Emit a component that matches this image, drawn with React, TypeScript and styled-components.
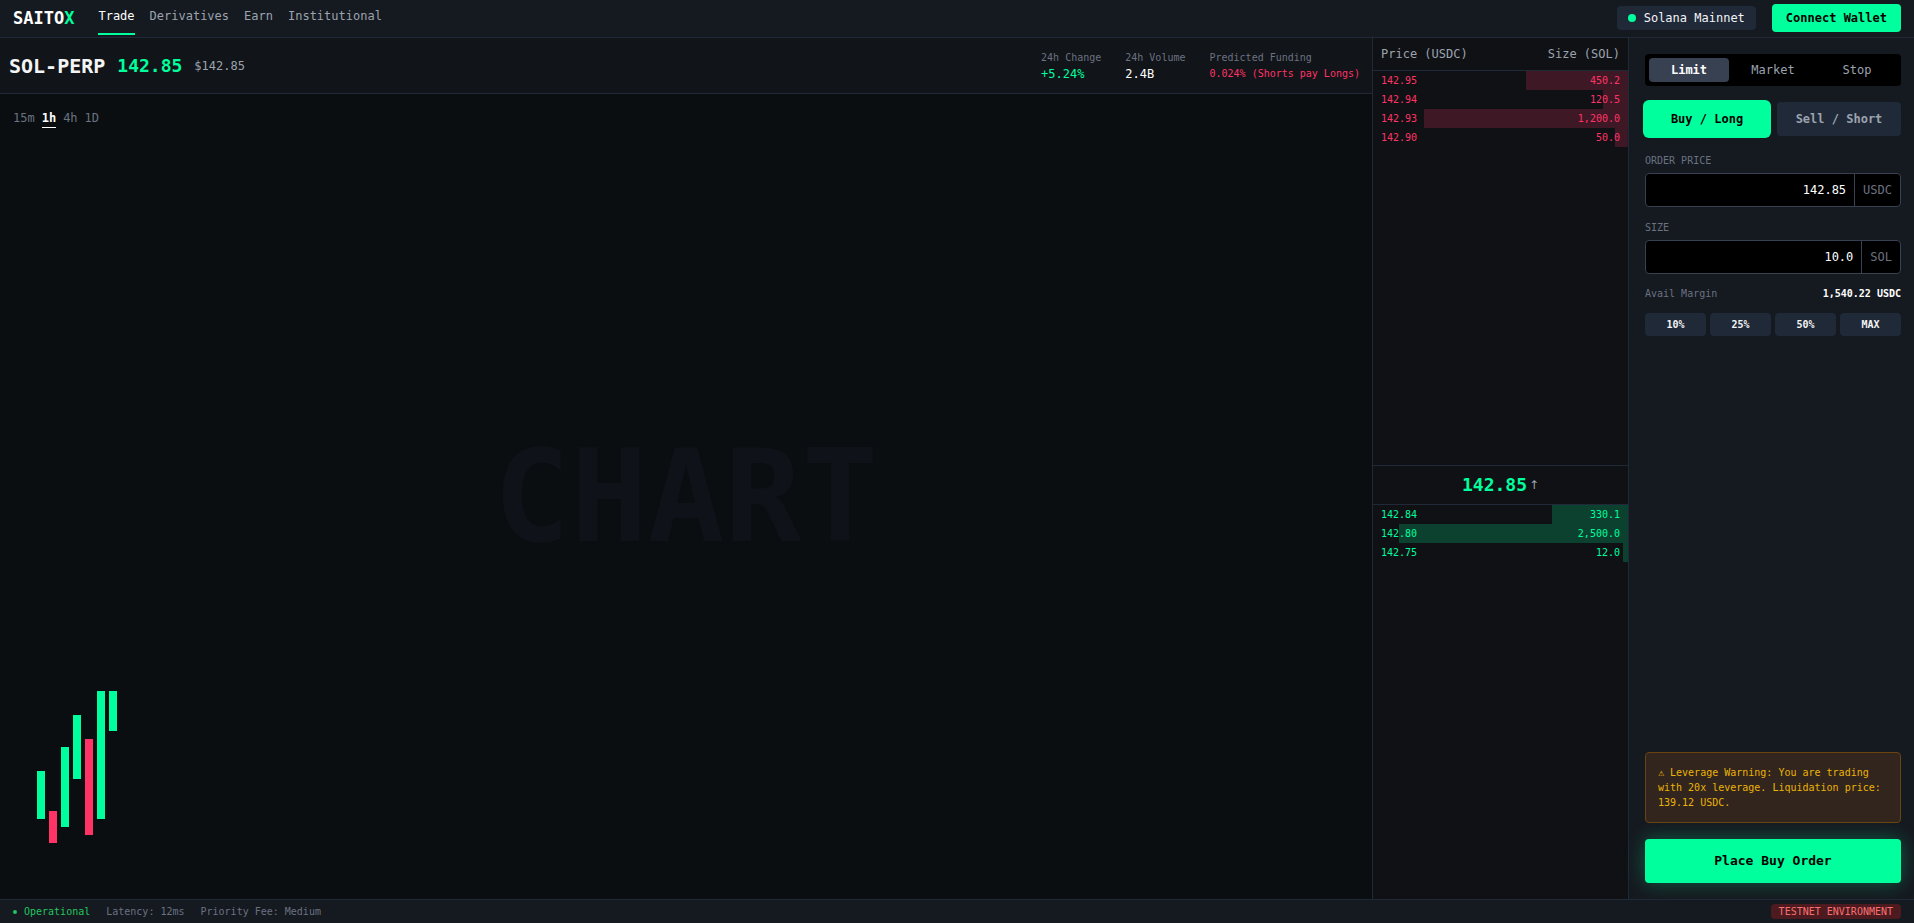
import React from "react";
import styled, { createGlobalStyle, css } from "styled-components";

const c = {
  green: "#00ff9d",
  red: "#ff3366",
  page: "#0a0e10",
  book: "#0f1115",
  title: "#111418",
  panel: "#151920",
  line: "#1f2937",
  lineStrong: "#374151",
  muted: "#9ca3af",
  dim: "#6b7280",
  text: "#f3f4f6",
};

const Global = createGlobalStyle`
  *, *::before, *::after { box-sizing: border-box; }
  body {
    margin: 0;
    background: ${c.page};
    color: ${c.text};
    font-family: "DejaVu Sans Mono", "Liberation Mono", monospace;
    font-size: 12px;
    line-height: 16px;
  }
  button, input { font: inherit; color: inherit; border: 0; margin: 0; padding: 0; background: none; }
  button { cursor: pointer; white-space: nowrap; }
  a { color: inherit; text-decoration: none; }
`;

const Page = styled.div`
  display: flex;
  flex-direction: column;
  min-height: 100vh;
`;

const Header = styled.header`
  display: flex;
  align-items: flex-start;
  justify-content: space-between;
  height: 38px;
  padding: 0 13px;
  background: ${c.panel};
  border-bottom: 1px solid ${c.line};
`;

const HeaderSide = styled.div<{ $gap: number }>`
  display: flex;
  align-items: center;
  height: 36px;
  gap: ${(p) => p.$gap}px;
`;

const Logo = styled.div`
  font-size: 17px;
  font-weight: 700;
  line-height: 28px;
  color: #fff;
  span { color: ${c.green}; }
`;

const Nav = styled.nav`
  display: flex;
  gap: 15px;
  height: 34px;
`;

const NavLink = styled.a<{ $active?: boolean }>`
  display: flex;
  padding-top: 7px;
  height: 34px;
  color: ${(p) => (p.$active ? "#fff" : c.muted)};
  border-bottom: 2px solid ${(p) => (p.$active ? c.green : "transparent")};
`;

const Network = styled.div`
  display: flex;
  align-items: center;
  gap: 8px;
  height: 24px;
  padding: 0 11px;
  border-radius: 4px;
  background: ${c.line};
`;

const Dot = styled.span`
  width: 8px;
  height: 8px;
  border-radius: 50%;
  background: ${c.green};
`;

const Connect = styled.button`
  height: 28px;
  padding: 0 14px;
  border-radius: 4px;
  background: ${c.green};
  color: #000;
  font-weight: 700;
`;

const Main = styled.main`
  flex: 1;
  display: grid;
  grid-template-columns: minmax(0, 1fr) 256px 286px;
`;

const Market = styled.section`
  display: flex;
  flex-direction: column;
`;

const TitleBar = styled.div`
  display: flex;
  align-items: center;
  justify-content: space-between;
  height: 56px;
  padding: 0 12px 0 9px;
  background: ${c.title};
  border-bottom: 1px solid ${c.line};
`;

const Pair = styled.div`
  display: flex;
  align-items: center;
  gap: 12px;
`;

const Symbol = styled.h1`
  margin: 0;
  font-size: 20px;
  line-height: 28px;
  font-weight: 700;
`;

const Price = styled.span`
  font-size: 18px;
  line-height: 28px;
  font-weight: 700;
  color: ${c.green};
`;

const Mark = styled.span`
  color: ${c.muted};
`;

const Stats = styled.dl`
  display: flex;
  gap: 24px;
  margin: 0;
`;

const Stat = styled.div`
  dt { font-size: 10px; color: ${c.dim}; }
`;

const StatValue = styled.dd<{ $color: string; $small?: boolean }>`
  margin: 0;
  color: ${(p) => p.$color};
  ${(p) => p.$small && css`font-size: 10px;`}
`;

const Chart = styled.div`
  position: relative;
  flex: 1;
  display: flex;
  flex-direction: column;
  justify-content: space-between;
`;

const Frames = styled.div`
  display: flex;
  gap: 7px;
  padding: 15px 13px;
`;

const Frame = styled.button<{ $active?: boolean }>`
  height: 19px;
  color: ${(p) => (p.$active ? "#fff" : c.dim)};
  font-weight: ${(p) => (p.$active ? 700 : 400)};
  border-bottom: 1px solid ${(p) => (p.$active ? "#fff" : "transparent")};
`;

const Watermark = styled.div`
  position: absolute;
  inset: 0;
  display: flex;
  align-items: center;
  justify-content: center;
  font-size: 128px;
  line-height: 128px;
  font-weight: 700;
  color: #0f1218;
  pointer-events: none;
`;

const Candles = styled.div`
  display: flex;
  align-items: flex-end;
  gap: 4px;
  padding: 0 37px 56px;
`;

const Candle = styled.div<{ $h: number; $lift: number; $down?: boolean }>`
  width: 8px;
  height: ${(p) => p.$h}px;
  margin-bottom: ${(p) => p.$lift}px;
  background: ${(p) => (p.$down ? c.red : c.green)};
`;

const Book = styled.section`
  display: flex;
  flex-direction: column;
  background: ${c.book};
  border-left: 1px solid ${c.line};
`;

const BookHead = styled.div`
  display: flex;
  align-items: center;
  justify-content: space-between;
  height: 33px;
  padding: 0 8px;
  color: ${c.muted};
  border-bottom: 1px solid ${c.line};
`;

const Side = styled.div`
  flex: 1 1 0;
`;

const Level = styled.div<{ $depth: number; $ask?: boolean }>`
  display: flex;
  justify-content: space-between;
  padding: 2px 8px;
  font-size: 10px;
  line-height: 15px;
  color: ${(p) => (p.$ask ? c.red : c.green)};
  background: linear-gradient(
      ${(p) => (p.$ask ? "#3f1826, #3f1826" : "#0c4130, #0c4130")}
    )
    right / ${(p) => p.$depth}% 100% no-repeat;
`;

const Mid = styled.div`
  display: flex;
  align-items: center;
  justify-content: center;
  gap: 2px;
  height: 40px;
  border-top: 1px solid ${c.line};
  border-bottom: 1px solid ${c.line};
  color: ${c.muted};
`;

const Arrow = styled.span`
  font-family: "DejaVu Sans", sans-serif;
`;

const Ticket = styled.form`
  display: flex;
  flex-direction: column;
  padding: 16px 13px 16px 16px;
  background: ${c.panel};
  border-left: 1px solid ${c.line};
`;

const Tabs = styled.div`
  display: flex;
  gap: 4px;
  padding: 4px;
  border-radius: 4px;
  background: #000;
`;

const Tab = styled.button<{ $active?: boolean }>`
  flex: 1;
  height: 24px;
  border-radius: 4px;
  background: ${(p) => (p.$active ? c.lineStrong : "transparent")};
  color: ${(p) => (p.$active ? "#fff" : c.muted)};
  font-weight: ${(p) => (p.$active ? 700 : 400)};
`;

const Sides = styled.div`
  display: flex;
  gap: 8px;
  margin: 16px 0;
`;

const SideButton = styled.button<{ $active?: boolean }>`
  flex: 1 1 0;
  height: 34px;
  border-radius: 4px;
  font-weight: 700;
  background: ${(p) => (p.$active ? c.green : c.line)};
  color: ${(p) => (p.$active ? "#000" : c.muted)};
  ${(p) => p.$active && css`box-shadow: 0 0 0 2px ${c.green};`}
`;

const Field = styled.div`
  display: flex;
  flex-direction: column;
  gap: 4px;
  margin-bottom: 12px;
`;

const Label = styled.label`
  font-size: 10px;
  line-height: 17px;
  color: ${c.dim};
  text-transform: uppercase;
`;

const InputBox = styled.div`
  display: flex;
  height: 34px;
  border: 1px solid ${c.lineStrong};
  border-radius: 4px;
  background: #000;
  overflow: hidden;
`;

const Input = styled.input`
  flex: 1;
  min-width: 0;
  padding: 0 8px;
  text-align: right;
  color: #fff;
  outline: 0;
`;

const Unit = styled.span`
  display: flex;
  align-items: center;
  padding: 0 8px;
  color: ${c.dim};
  border-left: 1px solid ${c.lineStrong};
`;

const Margin = styled.div`
  display: flex;
  justify-content: space-between;
  margin-bottom: 12px;
  font-size: 10px;
  line-height: 15px;
  color: ${c.dim};
  strong { color: #fff; }
`;

const Presets = styled.div`
  display: grid;
  grid-template-columns: repeat(4, 1fr);
  gap: 4px;
`;

const Preset = styled.button`
  height: 23px;
  border-radius: 4px;
  background: ${c.line};
  font-size: 10px;
  font-weight: 700;
`;

const Warning = styled.p`
  margin: auto 0 16px;
  padding: 12px;
  border: 1px solid #6b430f;
  border-radius: 4px;
  background: #32251d;
  color: #eab308;
  font-size: 10px;
  line-height: 15px;
`;

const Submit = styled.button`
  height: 44px;
  border-radius: 4px;
  background: ${c.green};
  color: #000;
  font-size: 13px;
  font-weight: 700;
  box-shadow: 0 0 20px rgba(0, 255, 157, 0.3);
`;

const Footer = styled.footer`
  display: flex;
  align-items: center;
  justify-content: space-between;
  height: 24px;
  padding: 0 13px;
  background: ${c.panel};
  border-top: 1px solid ${c.line};
  color: ${c.dim};
  font-size: 10px;
  line-height: 15px;
`;

const Status = styled.div`
  display: flex;
  gap: 16px;
`;

const Online = styled.span`
  display: flex;
  align-items: center;
  gap: 7px;
  color: #22c55e;
  &::before {
    content: "";
    width: 4px;
    height: 4px;
    border-radius: 50%;
    background: currentColor;
  }
`;

const Badge = styled.span`
  padding: 0 8px;
  border-radius: 4px;
  background: #4c1a1f;
  color: #f87171;
`;

const candles = [
  { h: 48, lift: 24 },
  { h: 32, lift: 0, down: true },
  { h: 80, lift: 16 },
  { h: 64, lift: 64 },
  { h: 96, lift: 8, down: true },
  { h: 128, lift: 24 },
  { h: 40, lift: 112 },
];

const asks = [
  { price: "142.95", size: "450.2", depth: 40 },
  { price: "142.94", size: "120.5", depth: 10 },
  { price: "142.93", size: "1,200.0", depth: 80 },
  { price: "142.90", size: "50.0", depth: 5 },
];

const bids = [
  { price: "142.84", size: "330.1", depth: 30 },
  { price: "142.80", size: "2,500.0", depth: 90 },
  { price: "142.75", size: "12.0", depth: 2 },
];

export default function App() {
  return (
    <Page>
      <Global />
      <Header>
        <HeaderSide $gap={24}>
          <Logo>SAITO<span>X</span></Logo>
          <Nav>
            <NavLink href="#trade" $active>Trade</NavLink>
            <NavLink href="#derivatives">Derivatives</NavLink>
            <NavLink href="#earn">Earn</NavLink>
            <NavLink href="#institutional">Institutional</NavLink>
          </Nav>
        </HeaderSide>
        <HeaderSide $gap={16}>
          <Network><Dot />Solana Mainnet</Network>
          <Connect type="button">Connect Wallet</Connect>
        </HeaderSide>
      </Header>

      <Main>
        <Market>
          <TitleBar>
            <Pair>
              <Symbol>SOL-PERP</Symbol>
              <Price>142.85</Price>
              <Mark>$142.85</Mark>
            </Pair>
            <Stats>
              <Stat>
                <dt>24h Change</dt>
                <StatValue $color={c.green}>+5.24%</StatValue>
              </Stat>
              <Stat>
                <dt>24h Volume</dt>
                <StatValue $color="#fff">2.4B</StatValue>
              </Stat>
              <Stat>
                <dt>Predicted Funding</dt>
                <StatValue $color={c.red} $small>0.024% (Shorts pay Longs)</StatValue>
              </Stat>
            </Stats>
          </TitleBar>
          <Chart>
            <Watermark>CHART</Watermark>
            <Frames>
              <Frame type="button">15m</Frame>
              <Frame type="button" $active>1h</Frame>
              <Frame type="button">4h</Frame>
              <Frame type="button">1D</Frame>
            </Frames>
            <Candles>
              {candles.map((k, i) => (
                <Candle key={i} $h={k.h} $lift={k.lift} $down={k.down} />
              ))}
            </Candles>
          </Chart>
        </Market>

        <Book>
          <BookHead><span>Price (USDC)</span><span>Size (SOL)</span></BookHead>
          <Side>
            {asks.map((l) => (
              <Level key={l.price} $depth={l.depth} $ask>
                <span>{l.price}</span><span>{l.size}</span>
              </Level>
            ))}
          </Side>
          <Mid><Price>142.85</Price><Arrow>↑</Arrow></Mid>
          <Side>
            {bids.map((l) => (
              <Level key={l.price} $depth={l.depth}>
                <span>{l.price}</span><span>{l.size}</span>
              </Level>
            ))}
          </Side>
        </Book>

        <Ticket onSubmit={(e) => e.preventDefault()}>
          <Tabs>
            <Tab type="button" $active>Limit</Tab>
            <Tab type="button">Market</Tab>
            <Tab type="button">Stop</Tab>
          </Tabs>
          <Sides>
            <SideButton type="button" $active>Buy / Long</SideButton>
            <SideButton type="button">Sell / Short</SideButton>
          </Sides>
          <Field>
            <Label htmlFor="price">Order Price</Label>
            <InputBox>
              <Input id="price" defaultValue="142.85" />
              <Unit>USDC</Unit>
            </InputBox>
          </Field>
          <Field>
            <Label htmlFor="size">Size</Label>
            <InputBox>
              <Input id="size" defaultValue="10.0" />
              <Unit>SOL</Unit>
            </InputBox>
          </Field>
          <Margin><span>Avail Margin</span><strong>1,540.22 USDC</strong></Margin>
          <Presets>
            <Preset type="button">10%</Preset>
            <Preset type="button">25%</Preset>
            <Preset type="button">50%</Preset>
            <Preset type="button">MAX</Preset>
          </Presets>
          <Warning>
            ⚠ Leverage Warning: You are trading with 20x leverage. Liquidation price: 139.12 USDC.
          </Warning>
          <Submit type="submit">Place Buy Order</Submit>
        </Ticket>
      </Main>

      <Footer>
        <Status>
          <Online>Operational</Online>
          <span>Latency: 12ms</span>
          <span>Priority Fee: Medium</span>
        </Status>
        <Badge>TESTNET ENVIRONMENT</Badge>
      </Footer>
    </Page>
  );
}
